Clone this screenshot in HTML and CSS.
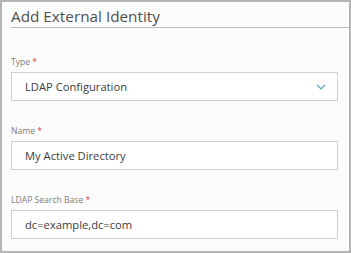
FILE: index.html
```html
<!DOCTYPE html>
<html lang="en">
<head>
  <meta charset="UTF-8" />
  <meta name="viewport" content="width=device-width, initial-scale=1.0" />
  <title>Add External Identity</title>
  <link rel="stylesheet" href="styles.css">
</head>
<body>
  <div class="panel">
    <div class="panel-head">
      <h1 class="panel-title">Add External Identity</h1>
    </div>
    <form class="form">
      <div class="field">
        <label class="field-label">Type <span class="req">*</span></label>
        <div class="control select">
          <span class="control-text">LDAP Configuration</span>
          <svg class="chevron" width="10" height="6" viewBox="0 0 10 6">
            <path d="M1 1 L5 5 L9 1" fill="none" stroke="#5fa6c4" stroke-width="1.2" />
          </svg>
        </div>
      </div>
      <div class="field">
        <label class="field-label">Name <span class="req">*</span></label>
        <div class="control">
          <span class="control-text">My Active Directory</span>
        </div>
      </div>
      <div class="field">
        <label class="field-label">LDAP Search Base <span class="req">*</span></label>
        <div class="control">
          <span class="control-text">dc=example,dc=com</span>
        </div>
      </div>
    </form>
  </div>
</body>
</html>
```
FILE: styles.css
```css
* { margin: 0; padding: 0; box-sizing: border-box; }
html, body {
  width: 100%; height: 100%; overflow: hidden;
  background: #fff; font-family: 'Open Sans', 'Liberation Sans', sans-serif;
}
.panel {
  width: 351px; height: 253px;
  border: 2px solid #b5b5b5;
  background: #fcfcfc;
  padding-left: 9px;
}
.panel-head {
  border-bottom: 1px solid #bdbdbd;
  padding-top: 3px;
}
.panel-title {
  font-size: 15.3px; font-weight: 400; color: #505050;
  line-height: 22px;
}
.form {
  padding: 27px 11px 0 0;
  display: flex; flex-direction: column; gap: 23px;
}
.field { display: flex; flex-direction: column; gap: 3px; }
.field-label {
  font-size: 8.6px; line-height: 14px; color: #808080;
}
.req { color: #d9453c; }
.control {
  height: 29px;
  border: 1px solid #cfcfcf;
  background: #fff;
  display: flex; align-items: center;
  padding: 0 11px 0 13px;
}
.control-text { flex: 1; font-size: 11.2px; color: #3c3c3c; }
.chevron { display: block; }
```
